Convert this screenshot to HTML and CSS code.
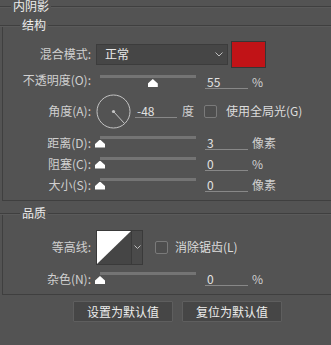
FILE: index.html
```html
<!DOCTYPE html>
<html>
<head>
<meta charset="utf-8">
<link rel="stylesheet" href="styles.css">
</head>
<body>
<div class="title"><span class="ln s1"></span><span class="tt">内阴影</span><span class="ln f"></span></div>

<div class="group g1">
  <div class="ghead"><span class="ln s2"></span><span class="gt">结构</span><span class="ln f"></span></div>

  <div class="row r-blend">
    <span class="lbl">混合模式:</span>
    <div class="select"><span>正常</span><svg width="8" height="5" viewBox="0 0 8 5"><polyline points="0.5,0.5 4,4 7.5,0.5" fill="none" stroke="#bdbdbd"/></svg></div>
    <div class="swatch"></div>
  </div>

  <div class="row r-op">
    <span class="lbl">不透明度(O):</span>
    <div class="slider"><div class="track"></div><div class="thumb" style="left:55%"></div></div>
    <div class="num">55</div><span class="unit">%</span>
  </div>

  <div class="row r-angle">
    <span class="lbl">角度(A):</span>
    <svg class="dial" width="35" height="35" viewBox="0 0 35 35"><circle cx="17.5" cy="17.5" r="16.5" fill="none" stroke="#c4c4c4"/><circle cx="17.5" cy="17.5" r="1.6" fill="#c4c4c4"/><line x1="17.5" y1="17.5" x2="28.5" y2="29.5" stroke="#c4c4c4"/></svg>
    <div class="num short">-48</div><span class="unit deg">度</span>
    <span class="chk"></span><span class="chktext">使用全局光(G)</span>
  </div>

  <div class="row r-sm first">
    <span class="lbl">距离(D):</span>
    <div class="slider"><div class="track"></div><div class="thumb" style="left:0%"></div></div>
    <div class="num">3</div><span class="unit">像素</span>
  </div>
  <div class="row r-sm">
    <span class="lbl">阻塞(C):</span>
    <div class="slider"><div class="track"></div><div class="thumb" style="left:0%"></div></div>
    <div class="num">0</div><span class="unit">%</span>
  </div>
  <div class="row r-sm">
    <span class="lbl">大小(S):</span>
    <div class="slider"><div class="track"></div><div class="thumb" style="left:0%"></div></div>
    <div class="num">0</div><span class="unit">像素</span>
  </div>
</div>

<div class="group g2">
  <div class="ghead"><span class="ln s2"></span><span class="gt">品质</span><span class="ln f"></span></div>

  <div class="row r-contour">
    <span class="lbl">等高线:</span>
    <div class="contour">
      <svg width="34" height="33" viewBox="0 0 34 33"><rect width="34" height="33" fill="#454545"/><polygon points="0,0 34,0 0,33" fill="#ffffff"/></svg>
      <div class="cdrop"><svg width="7" height="4" viewBox="0 0 7 4"><polyline points="0.5,0.5 3.5,3.5 6.5,0.5" fill="none" stroke="#bdbdbd"/></svg></div>
    </div>
    <span class="chk c2"></span><span class="chktext c2t">消除锯齿(L)</span>
  </div>

  <div class="row r-noise">
    <span class="lbl">杂色(N):</span>
    <div class="slider"><div class="track"></div><div class="thumb" style="left:0%"></div></div>
    <div class="num">0</div><span class="unit">%</span>
  </div>
</div>

<div class="buttons">
  <div class="btn">设置为默认值</div>
  <div class="btn">复位为默认值</div>
</div>
</body>
</html>
```

FILE: styles.css
```css
* { box-sizing: border-box; margin: 0; padding: 0; }
html, body { background: #535353; }
body {
  width: 331px;
  height: 345px;
  overflow: hidden;
  font-family: "Noto Sans CJK SC", "Microsoft YaHei", sans-serif;
  font-size: 12px;
  color: #d0d0d0;
}

.ln { height: 1px; background: #3f3f3f; box-shadow: 0 1px 0 #5a5a5a; }
.ln.f { flex: 1; }
.ln.s1 { width: 11px; }
.ln.s2 { width: 20px; }

.title { display: flex; align-items: center; height: 12px; }
.title .tt { line-height: 12px; padding: 0 2px; color: #ececec; }

.group {
  display: flex;
  flex-direction: column;
  margin-left: 2px;
  border-left: 1px solid #3f3f3f;
  border-bottom: 1px solid #3f3f3f;
}
.g1 { margin-top: 13px; padding-bottom: 5px; }
.g2 { margin-top: 12px; padding-bottom: 3px; }

.ghead {
  display: flex;
  align-items: flex-start;
  height: 14px;
  margin: -7px 0 0 -3px;
}
.ghead .ln { margin-top: 7px; }
.ghead .gt { line-height: 14px; padding: 0 2px; color: #ececec; }

.row { display: flex; align-items: center; }
.lbl { width: 88px; text-align: right; line-height: 16px; white-space: nowrap; }

.r-blend { margin-top: 8px; height: 28px; }
.r-op { height: 24px; }
.r-angle { height: 38px; }
.r-sm { height: 21px; }
.r-sm.first { margin-top: 2px; }
.r-contour { margin-top: 7px; height: 40px; }
.r-noise { height: 24px; }

.select {
  display: flex;
  align-items: center;
  justify-content: space-between;
  width: 132px;
  height: 21px;
  margin-left: 5px;
  padding: 0 4px 0 8px;
  background: #464646;
  border: 1px solid #3c3c3c;
  color: #e8e8e8;
  line-height: 16px;
}
.swatch {
  width: 35px;
  height: 27px;
  margin-left: 3px;
  background: #c11317;
  border: 1px solid #363636;
}

.slider { position: relative; width: 96px; height: 14px; margin-left: 9px; }
.track { height: 3px; background: #747474; }
.thumb {
  position: absolute;
  top: 4px;
  width: 10px;
  height: 8px;
  margin-left: -5px;
  background: #ffffff;
  clip-path: polygon(50% 0, 100% 55%, 100% 100%, 0 100%, 0 55%);
}

.num {
  width: 43px;
  height: 14px;
  line-height: 13px;
  margin-left: 9px;
  padding-left: 2px;
  border-bottom: 1px solid #888888;
  color: #e2e2e2;
}
.unit { margin-left: 4px; line-height: 16px; }

.r-op .slider, .r-op .num, .r-op .unit { margin-top: 4px; }

.dial { margin-left: 5px; display: block; }
.num.short { width: 42px; margin-left: 4px; }
.unit.deg { margin-left: 5px; }

.chk {
  width: 13px;
  height: 13px;
  margin-left: 10px;
  border: 1px solid #7a7a7a;
  border-radius: 2px;
  background: #4e4e4e;
}
.chktext { margin-left: 9px; line-height: 16px; color: #dcdcdc; }

.contour { display: flex; height: 35px; margin-left: 5px; border: 1px solid #3a3a3a; }
.contour svg { display: block; }
.cdrop {
  width: 11px;
  display: flex;
  align-items: center;
  justify-content: center;
  border-left: 1px solid #3a3a3a;
  background: #4a4a4a;
}
.chk.c2 { margin-left: 12px; }
.chktext.c2t { margin-left: 7px; }

.buttons { display: flex; gap: 9px; margin-top: 6px; padding-left: 73px; }
.btn {
  width: 100px;
  height: 21px;
  line-height: 19px;
  text-align: center;
  background: #464646;
  border: 1px solid #5e5e5e;
  border-radius: 1px;
  color: #ececec;
}
```
